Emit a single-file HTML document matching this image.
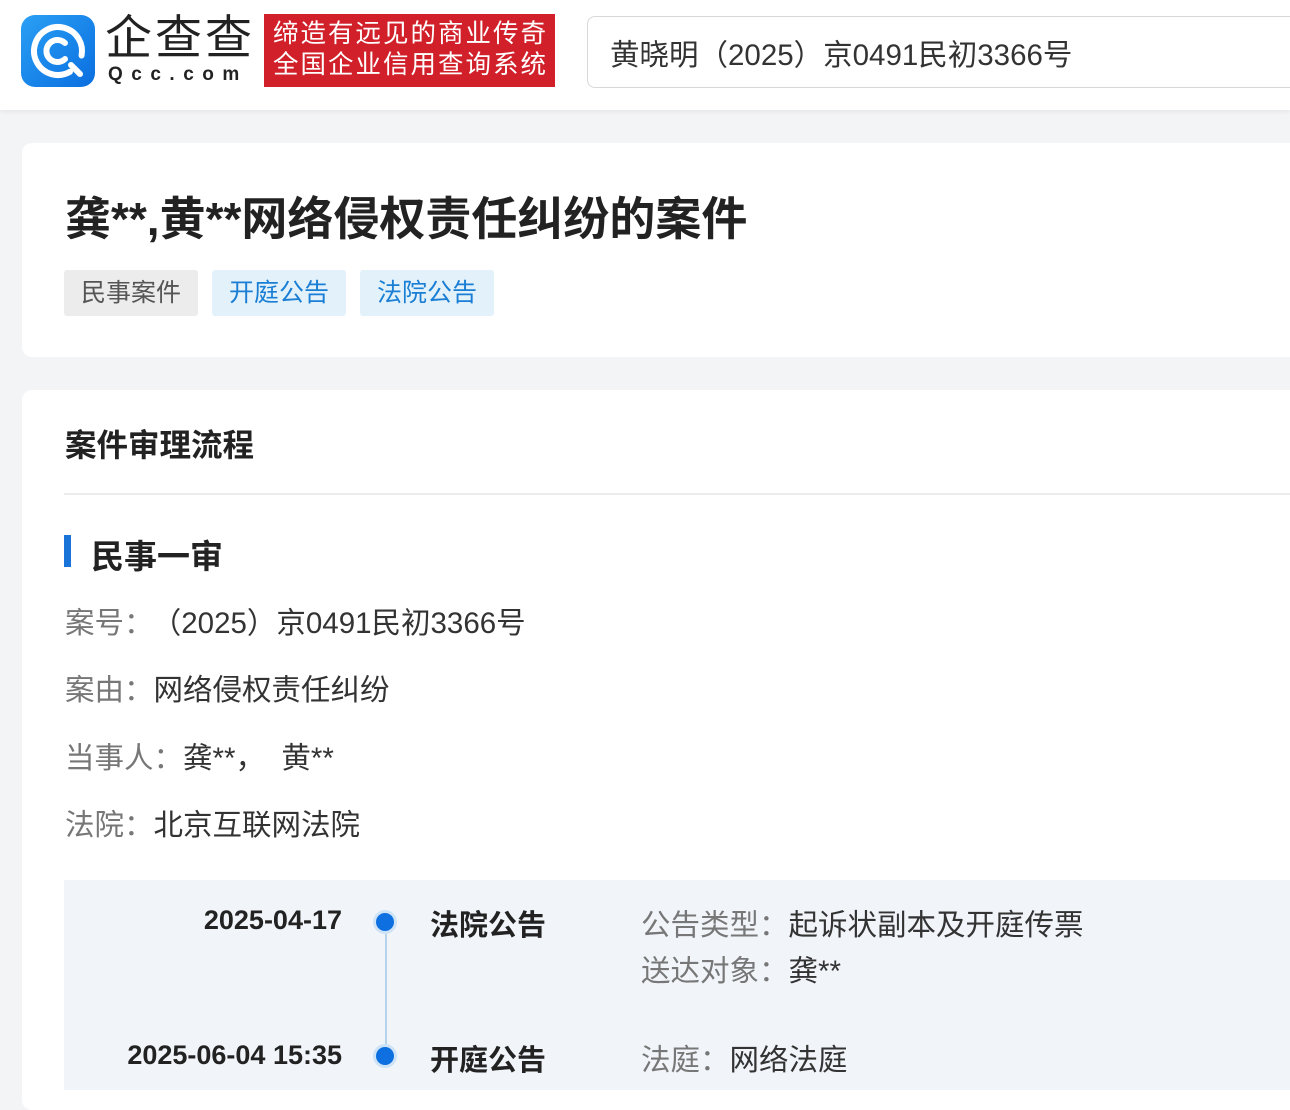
<!DOCTYPE html>
<html><head><meta charset="utf-8"><style>
*{margin:0;padding:0;box-sizing:border-box}
body{width:1290px;height:1082px;overflow:hidden;background:#f3f4f6;font-family:"Liberation Sans","Noto Sans CJK SC",sans-serif;color:#222;position:relative}
.abs{position:absolute;white-space:nowrap}
.hdr{position:absolute;left:0;top:0;width:1290px;height:110px;background:#fff;box-shadow:0 2px 4px rgba(0,0,0,.06)}
.card{position:absolute;left:22px;width:1300px;background:#fff;border-radius:10px}
.tag{position:absolute;top:270px;height:46px;width:134px;border-radius:3px;font-size:25px;line-height:46px;text-align:center}
.row{position:absolute;left:65px;font-size:29.5px;color:#333;white-space:nowrap}
.row span{color:#777}
</style></head><body>
<div class="hdr">
 <div class="abs" style="left:21px;top:15px;width:74px;height:72px;border-radius:14px;background:linear-gradient(135deg,#2aa0f5,#0a6ee0)">
  <svg width="74" height="72" viewBox="0 0 74 72"><g fill="none" stroke="#fff" stroke-linecap="round"><circle cx="37" cy="36" r="24" stroke-width="6" stroke-dasharray="130 40" transform="rotate(60 37 36)"/><path d="M44 28a11 11 0 1 0 0 16" stroke-width="6"/><path d="M50 50l9 9" stroke-width="6"/></g></svg>
 </div>
 <div class="abs" style="left:105px;top:12px;font-size:47px;line-height:52px;color:#222;letter-spacing:3px">企查查</div>
 <div class="abs" style="left:108px;top:64px;font-size:19px;letter-spacing:8.5px;color:#222;font-weight:bold">Qcc.com</div>
 <div class="abs" style="left:264px;top:14px;width:291px;height:73px;background:#d1202a;color:#fff;font-size:25.5px;line-height:31px;padding:5px 0 0 9px;letter-spacing:2px">缔造有远见的商业传奇<br>全国企业信用查询系统</div>
 <div class="abs" style="left:587px;top:16px;width:720px;height:72px;border:1.5px solid #d8d8d8;border-radius:8px;background:#fff"></div>
 <div class="abs" style="left:610px;top:32px;font-size:29.5px;color:#333">黄晓明（2025）京0491民初3366号</div>
</div>
<div class="card" style="top:143px;height:214px"></div>
<div class="abs" style="left:65px;top:183px;font-size:46px;font-weight:bold;color:#222">龚**,黄**网络侵权责任纠纷的案件</div>
<div class="tag" style="left:64px;background:#ececec;color:#555">民事案件</div>
<div class="tag" style="left:212px;background:#e3f1fb;color:#1a7fd4">开庭公告</div>
<div class="tag" style="left:360px;background:#e3f1fb;color:#1a7fd4">法院公告</div>
<div class="card" style="top:390px;height:720px"></div>
<div class="abs" style="left:65px;top:420px;font-size:31.5px;font-weight:bold;color:#222">案件审理流程</div>
<div class="abs" style="left:64px;top:493px;width:1240px;height:2px;background:#ececec"></div>
<div class="abs" style="left:64px;top:535px;width:7px;height:32px;background:#1a73d9"></div>
<div class="abs" style="left:91px;top:530px;font-size:33px;font-weight:bold;color:#222">民事一审</div>
<div class="row" style="top:600px"><span>案号：</span><b style="font-weight:normal;margin-left:13px">（2025）京0491民初3366号</b></div>
<div class="row" style="top:667px"><span>案由：</span>网络侵权责任纠纷</div>
<div class="row" style="top:735px"><span>当事人：</span>龚**，&nbsp; 黄**</div>
<div class="row" style="top:802px"><span>法院：</span>北京互联网法院</div>
<div class="abs" style="left:64px;top:880px;width:1240px;height:210px;background:#f1f5fa"></div>
<div class="abs" style="left:385px;top:925px;width:2px;height:130px;background:#b7d3ec"></div>
<div class="abs" style="left:376px;top:913px;width:18px;height:18px;border-radius:50%;background:#0d6fe0;box-shadow:0 0 0 3px #cfe3f7"></div>
<div class="abs" style="left:376px;top:1047px;width:18px;height:18px;border-radius:50%;background:#0d6fe0;box-shadow:0 0 0 3px #cfe3f7"></div>
<div class="abs" style="right:948px;top:905px;font-size:27px;font-weight:bold;color:#222">2025-04-17</div>
<div class="abs" style="right:948px;top:1040px;font-size:27px;font-weight:bold;color:#222">2025-06-04 15:35</div>
<div class="abs" style="left:430px;top:902px;font-size:29px;font-weight:bold;color:#222">法院公告</div>
<div class="abs" style="left:430px;top:1037px;font-size:29px;font-weight:bold;color:#222">开庭公告</div>
<div class="row" style="left:641px;top:902px"><span>公告类型：</span>起诉状副本及开庭传票</div>
<div class="row" style="left:641px;top:948px"><span>送达对象：</span>龚**</div>
<div class="row" style="left:641px;top:1037px"><span>法庭：</span>网络法庭</div>
</body></html>
